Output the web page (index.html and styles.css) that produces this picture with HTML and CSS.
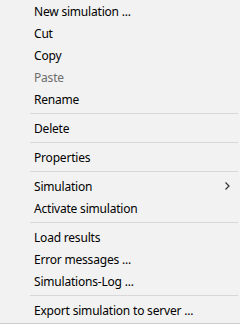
FILE: index.html
```html
<!DOCTYPE html>
<html>

<head>
    <title>Context Menu</title>
    <link rel="stylesheet" href="styles.css">
</head>

<body>
    <ul class="menu">
        <li class="item">New simulation ...</li>
        <li class="item">Cut</li>
        <li class="item">Copy</li>
        <li class="item disabled">Paste</li>
        <li class="item">Rename</li>
        <li class="sep"></li>
        <li class="item">Delete</li>
        <li class="sep"></li>
        <li class="item">Properties</li>
        <li class="sep"></li>
        <li class="item">Simulation
            <svg class="arrow" width="5" height="8" viewBox="0 0 5 8">
                <polyline points="0.5,0.5 4,4 0.5,7.5" fill="none" stroke="#333" stroke-width="1.2"/>
            </svg>
        </li>
        <li class="item">Activate simulation</li>
        <li class="sep"></li>
        <li class="item">Load results</li>
        <li class="item">Error messages ...</li>
        <li class="item">Simulations-Log ...</li>
        <li class="sep"></li>
        <li class="item">Export simulation to server ...</li>
    </ul>
</body>

</html>
```

FILE: styles.css
```css
body {
    margin: 0;
    background-color: #f2f2f2;
}

.menu {
    list-style: none;
    margin: 0;
    padding: 0 0 2px 0;
    width: 240px;
    height: 324px;
    box-sizing: border-box;
    border-bottom: 1px solid #cccccc;
    background-color: #f2f2f2;
    font-family: "Noto Sans", sans-serif;
    font-size: 12px;
    letter-spacing: -0.2px;
    color: #000000;
}

.item {
    height: 22px;
    display: flex;
    align-items: center;
    padding-left: 34px;
    padding-right: 10px;
}

.disabled {
    color: #6d6d6d;
}

.sep {
    height: 1px;
    margin: 3px 2px 3px 30px;
    background-color: #d7d7d7;
}

.arrow {
    margin-left: auto;
}
```
